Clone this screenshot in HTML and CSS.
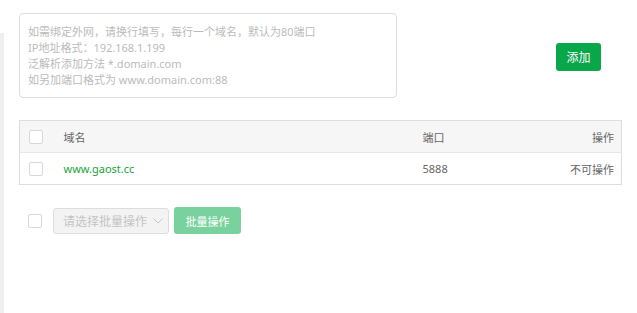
FILE: index.html
```html
<!DOCTYPE html>
<html lang="zh-CN">
<head>
<meta charset="utf-8">
<title>域名管理</title>
<link rel="stylesheet" href="styles.css">
</head>
<body>
<div class="page">
  <div class="side-strip"></div>
  <div class="content">
    <div class="top-row">
      <textarea class="domain-input" placeholder="如需绑定外网，请换行填写，每行一个域名，默认为80端口&#10;IP地址格式：192.168.1.199&#10;泛解析添加方法 *.domain.com&#10;如另加端口格式为 www.domain.com:88"></textarea>
      <button class="btn-add">添加</button>
    </div>
    <table class="domain-table">
      <thead>
        <tr>
          <th class="col-check"><span class="checkbox"></span></th>
          <th class="col-name">域名</th>
          <th class="col-port">端口</th>
          <th class="col-op">操作</th>
        </tr>
      </thead>
      <tbody>
        <tr>
          <td class="col-check"><span class="checkbox"></span></td>
          <td class="col-name"><a class="domain-link">www.gaost.cc</a></td>
          <td class="col-port">5888</td>
          <td class="col-op">不可操作</td>
        </tr>
      </tbody>
    </table>
    <div class="batch-row">
      <span class="checkbox"></span>
      <div class="select">
        <span class="select-text">请选择批量操作</span>
        <svg class="chevron" width="10" height="6" viewBox="0 0 10 6"><path d="M0.5 0.5 L5 5 L9.5 0.5" fill="none" stroke="#c8c8c8" stroke-width="1"/></svg>
      </div>
      <button class="btn-batch">批量操作</button>
    </div>
  </div>
</div>
</body>
</html>
```

FILE: styles.css
```css
* { box-sizing: border-box; }
html, body {
  margin: 0;
  padding: 0;
  background: #fff;
  font-family: "Noto Sans", "Noto Sans CJK SC", sans-serif;
  font-size: 11px;
  color: #666;
}
.page {
  display: flex;
  height: 313px;
  overflow: hidden;
}
.side-strip {
  width: 4px;
  margin-top: 33px;
  background: #efefef;
  flex: none;
}
.content {
  flex: 1;
  padding: 13px 15px 0 15px;
}
.top-row {
  display: flex;
  align-items: flex-start;
}
.domain-input {
  width: 378px;
  height: 85px;
  border: 1px solid #ddd;
  border-radius: 4px;
  padding: 10px 8px 8px;
  font-family: inherit;
  font-size: 11px;
  line-height: 16px;
  resize: none;
  outline: none;
  color: #555;
}
.domain-input::placeholder {
  color: #bbb;
}
.btn-add {
  margin: 30px 21px 0 auto;
  width: 45px;
  height: 28px;
  border: none;
  border-radius: 3px;
  background: #0aa64a;
  color: #fff;
  font-family: inherit;
  font-size: 12px;
  padding: 0;
}
.domain-table {
  margin-top: 22px;
  width: 603px;
  border-collapse: collapse;
  border: 1px solid #ddd;
}
.domain-table th {
  background: #f6f6f6;
  font-weight: normal;
  height: 32px;
  text-align: left;
  color: #666;
  border-bottom: 1px solid #e8e8e8;
}
.domain-table td {
  height: 32px;
}
.domain-table th, .domain-table td {
  padding: 0 8px;
  vertical-align: middle;
}
.domain-table .col-check {
  width: 36px;
  padding-left: 9px;
  padding-right: 0;
}
.col-port { width: 127px; }
.domain-table .col-op { text-align: right; width: 80px; padding-right: 7px; }
.checkbox {
  display: block;
  width: 14px;
  height: 14px;
  border: 1px solid #d8d8d8;
  border-radius: 2px;
  background: #fff;
}
.domain-link {
  color: #20a53a;
  text-decoration: none;
}
.batch-row {
  margin-top: 22px;
  padding-left: 9px;
  display: flex;
  align-items: center;
}
.select {
  margin-left: 11px;
  width: 116px;
  height: 26px;
  border: 1px solid #ddd;
  border-radius: 3px;
  background: #f3f3f3;
  display: flex;
  align-items: center;
  padding: 0 5px 0 9px;
}
.select-text {
  color: #c4c4c4;
  font-size: 12px;
  flex: 1;
}
.chevron { flex: none; }
.btn-batch {
  margin-left: 5px;
  width: 67px;
  height: 27px;
  border: none;
  border-radius: 3px;
  background: #79d19d;
  color: #fff;
  font-family: inherit;
  font-size: 11px;
  padding: 0;
}
```
